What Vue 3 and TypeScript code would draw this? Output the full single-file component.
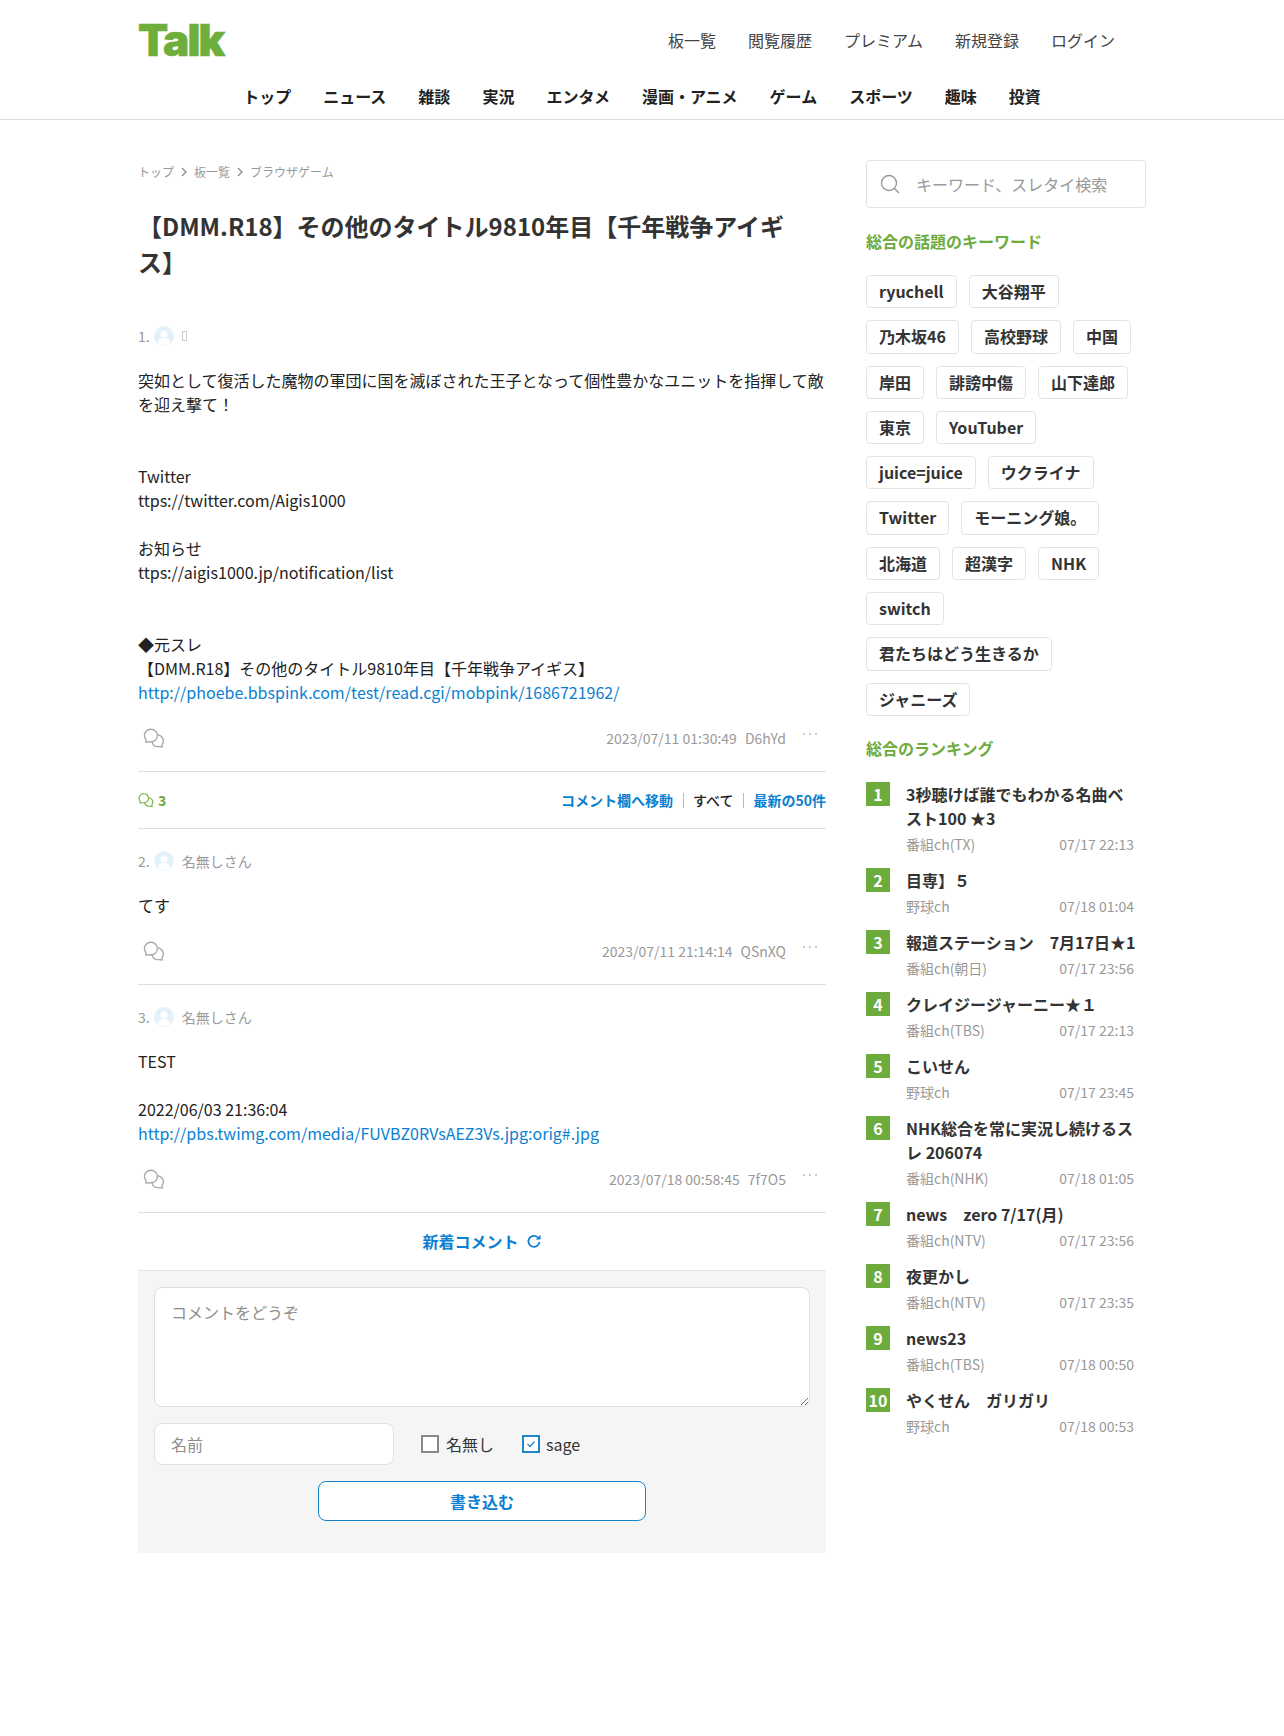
<script setup lang="ts">
interface Post {
  no: number
  name: string
  lines: { text: string; href?: boolean }[]
  date: string
  id: string
}
const topNav: string[] = ['板一覧', '閲覧履歴', 'プレミアム', '新規登録', 'ログイン']
const mainNav: string[] = ['トップ', 'ニュース', '雑談', '実況', 'エンタメ', '漫画・アニメ', 'ゲーム', 'スポーツ', '趣味', '投資']
const keywords: string[] = ['ryuchell', '大谷翔平', '乃木坂46', '高校野球', '中国', '岸田', '誹謗中傷', '山下達郎', '東京', 'YouTuber', 'juice=juice', 'ウクライナ', 'Twitter', 'モーニング娘。', '北海道', '超漢字', 'NHK', 'switch', '君たちはどう生きるか', 'ジャニーズ']
const ranking = [
  { t: '3秒聴けば誰でもわかる名曲ベスト100 ★3', b: '番組ch(TX)', d: '07/17 22:13' },
  { t: '目専】５', b: '野球ch', d: '07/18 01:04' },
  { t: '報道ステーション　7月17日★1', b: '番組ch(朝日)', d: '07/17 23:56' },
  { t: 'クレイジージャーニー★１', b: '番組ch(TBS)', d: '07/17 22:13' },
  { t: 'こいせん', b: '野球ch', d: '07/17 23:45' },
  { t: 'NHK総合を常に実況し続けるスレ 206074', b: '番組ch(NHK)', d: '07/18 01:05' },
  { t: 'news　zero 7/17(月)', b: '番組ch(NTV)', d: '07/17 23:56' },
  { t: '夜更かし', b: '番組ch(NTV)', d: '07/17 23:35' },
  { t: 'news23', b: '番組ch(TBS)', d: '07/18 00:50' },
  { t: 'やくせん　ガリガリ', b: '野球ch', d: '07/18 00:53' },
]
const first: Post = {
  no: 1,
  name: '',
  lines: [
    { text: '突如として復活した魔物の軍団に国を滅ぼされた王子となって個性豊かなユニットを指揮して敵を迎え撃て！' },
    { text: '' },
    { text: '' },
    { text: 'Twitter' },
    { text: 'ttps://twitter.com/Aigis1000' },
    { text: '' },
    { text: 'お知らせ' },
    { text: 'ttps://aigis1000.jp/notification/list' },
    { text: '' },
    { text: '' },
    { text: '◆元スレ' },
    { text: '【DMM.R18】その他のタイトル9810年目【千年戦争アイギス】' },
    { text: 'http://phoebe.bbspink.com/test/read.cgi/mobpink/1686721962/', href: true },
  ],
  date: '2023/07/11 01:30:49',
  id: 'D6hYd',
}
const replies: Post[] = [
  { no: 2, name: '名無しさん', lines: [{ text: 'てす' }], date: '2023/07/11 21:14:14', id: 'QSnXQ' },
  {
    no: 3,
    name: '名無しさん',
    lines: [
      { text: 'TEST' },
      { text: '' },
      { text: '2022/06/03 21:36:04' },
      { text: 'http://pbs.twimg.com/media/FUVBZ0RVsAEZ3Vs.jpg:orig#.jpg', href: true },
    ],
    date: '2023/07/18 00:58:45',
    id: '7f7O5',
  },
]
const posts: { post: Post; bar: boolean }[] = [
  { post: first, bar: true },
  { post: replies[0], bar: false },
  { post: replies[1], bar: false },
]
</script>

<template>
  <div class="page">
    <header class="header">
      <div class="head-top">
        <a class="logo">Talk</a>
        <nav class="top-nav">
          <a v-for="n in topNav" :key="n">{{ n }}</a>
        </nav>
      </div>
      <nav class="main-nav">
        <a v-for="n in mainNav" :key="n">{{ n }}</a>
      </nav>
    </header>

    <div class="columns">
      <main class="content">
        <div class="crumbs">
          <a>トップ</a>
          <svg class="chev" viewBox="0 0 8 10"><path d="M2 1l4 4-4 4" /></svg>
          <a>板一覧</a>
          <svg class="chev" viewBox="0 0 8 10"><path d="M2 1l4 4-4 4" /></svg>
          <a>ブラウザゲーム</a>
        </div>
        <h1 class="title">【DMM.R18】その他のタイトル9810年目【千年戦争アイギス】</h1>

        <template v-for="item in posts" :key="item.post.no">
          <article class="post">
            <div class="post-head">
              <span class="no">{{ item.post.no }}.</span>
              <svg class="avatar" viewBox="0 0 20 20">
                <circle cx="10" cy="10" r="10" fill="#e3f1fb" />
                <circle cx="10" cy="8" r="3.600" fill="#fff" />
                <path d="M4 17c.8-3.800 3-5 6-5s5.200 1.200 6 5a10 10 0 0 1-12 0z" fill="#fff" />
              </svg>
              <span v-if="item.post.name" class="name">{{ item.post.name }}</span>
              <span v-else class="tofu"></span>
            </div>
            <div class="post-body">
              <template v-for="(l, i) in item.post.lines" :key="i">
                <a v-if="l.href" class="link">{{ l.text }}</a>
                <div v-else class="line">{{ l.text }}</div>
              </template>
            </div>
            <div class="post-foot">
              <svg class="bubbles" viewBox="0 0 24 24">
                <path d="M9 2.500a6.800 6.800 0 1 1-.1 13.600c-1.800 0-3.700-.1-5.900.4.500-1.300.3-2.300-.1-3.300A6.800 6.800 0 0 1 9 2.500z" />
                <path d="M15.700 8.600a6.500 6.500 0 0 1 5.300 10.200c-.3 1-.3 1.900.2 3-1.900-.5-3.600-.5-5.200-.4a6.500 6.500 0 0 1-6.100-5.300" />
              </svg>
              <span class="meta"><span>{{ item.post.date }}</span><span>{{ item.post.id }}</span></span>
              <svg class="dots" viewBox="0 0 16 4">
                <circle cx="2" cy="2" r="1" />
                <circle cx="8" cy="2" r="1" />
                <circle cx="14" cy="2" r="1" />
              </svg>
            </div>
          </article>
          <div v-if="item.bar" class="count-bar">
            <span class="count">
              <svg class="bubbles small" viewBox="0 0 24 24">
                <path d="M9 2.500a6.800 6.800 0 1 1-.1 13.600c-1.800 0-3.700-.1-5.900.4.500-1.300.3-2.300-.1-3.300A6.800 6.800 0 0 1 9 2.500z" />
                <path d="M15.700 8.600a6.500 6.500 0 0 1 5.300 10.200c-.3 1-.3 1.900.2 3-1.900-.5-3.600-.5-5.200-.4a6.500 6.500 0 0 1-6.100-5.300" />
              </svg>
              3
            </span>
            <span class="bar-links">
              <a class="blue">コメント欄へ移動</a>
              <i></i>
              <a class="dark">すべて</a>
              <i></i>
              <a class="blue">最新の50件</a>
            </span>
          </div>
        </template>

        <div class="refresh">
          新着コメント
          <svg viewBox="0 0 16 16"><path d="M13.400 9a5.500 5.500 0 1 1-1.700-4.700" /><path class="fill" d="M14.500 1.800v4.800H9.700z" /></svg>
        </div>

        <form class="form">
          <textarea class="textarea" placeholder="コメントをどうぞ"></textarea>
          <div class="form-row">
            <input class="name-input" placeholder="名前" />
            <span class="check"><span class="box"></span>名無し</span>
            <span class="check">
              <span class="box on"><svg viewBox="0 0 18 18"><path d="M4.500 9l3.200 3.200 5.800-6.400" /></svg></span>sage
            </span>
          </div>
          <button type="button" class="submit">書き込む</button>
        </form>
      </main>

      <aside class="side">
        <div class="search">
          <svg viewBox="0 0 24 24"><circle cx="11" cy="11" r="7.500" /><path d="M16.500 16.500l4.500 4.500" /></svg>
          <span>キーワード、スレタイ検索</span>
        </div>
        <h2 class="side-title">総合の話題のキーワード</h2>
        <div class="tags">
          <a v-for="k in keywords" :key="k" class="tag">{{ k }}</a>
        </div>
        <h2 class="side-title rank-title">総合のランキング</h2>
        <ol class="rank">
          <li v-for="(r, i) in ranking" :key="i" class="rank-item">
            <span class="badge">{{ i + 1 }}</span>
            <div class="rank-main">
              <div class="rank-t">{{ r.t }}</div>
              <div class="rank-m"><span>{{ r.b }}</span><span>{{ r.d }}</span></div>
            </div>
          </li>
        </ol>
      </aside>
    </div>
  </div>
</template>

<style>
html, body { margin: 0; background: #fff; }
</style>

<style scoped>
.page {
  min-height: 1736px;
  font-family: "Noto Sans CJK JP", "Noto Sans", sans-serif;
  color: #222;
  font-size: 16px;
  line-height: 24px;
}
a { color: inherit; text-decoration: none; }
.header { height: 119px; border-bottom: 1px solid #ddd; }
.head-top {
  width: 1008px;
  margin: 0 auto;
  height: 78px;
  display: flex;
  align-items: flex-start;
  justify-content: space-between;
}
.logo {
  font-family: Inter, sans-serif;
  font-weight: 900;
  font-size: 44px;
  line-height: 44px;
  letter-spacing: -1.900px;
  -webkit-text-stroke: 0.6px #6eaf3c;
  color: #6eaf3c;
  margin-top: 18px;
}
.top-nav {
  display: flex;
  gap: 32px;
  padding: 28px 31px 0 0;
  color: #444;
}
.main-nav {
  display: flex;
  justify-content: center;
  gap: 32px;
  font-weight: 700;
  line-height: 36px;
  color: #222;
}
.columns {
  width: 1008px;
  margin: 0 auto;
  display: flex;
  justify-content: space-between;
  padding-top: 40px;
}
.content { width: 688px; }
.crumbs {
  display: flex;
  align-items: center;
  gap: 6px;
  font-size: 12px;
  line-height: 24px;
  color: #999;
}
.chev { width: 8px; height: 10px; fill: none; stroke: #888; stroke-width: 1.200; }
.title {
  margin: 24px 0 0;
  padding-right: 8px;
  font-size: 24px;
  line-height: 36px;
  font-weight: 700;
  color: #333;
}
.post { border-bottom: 1px solid #ddd; padding-top: 20px; }
.title + .post { padding-top: 44px; }
.post-head {
  display: flex;
  align-items: center;
  font-size: 14px;
  line-height: 24px;
  color: #999;
}
.avatar { width: 20px; height: 20px; margin: 0 8px 0 4px; }
.tofu {
  box-sizing: border-box;
  width: 5px;
  height: 10px;
  border: 1px solid #ccc;
}
.post-body { margin-top: 20px; }
.line { min-height: 24px; }
.link { color: #0b7fd1; display: block; }
.post-foot {
  display: flex;
  align-items: center;
  height: 34px;
  margin-top: 17px;
  padding-bottom: 16px;
  color: #999;
}
.bubbles {
  width: 22px;
  height: 22px;
  margin-left: 5px;
  fill: none;
  stroke: #aaa;
  stroke-width: 1.500;
  stroke-linejoin: round;
}
.bubbles.small { width: 16px; height: 16px; margin: 0 4px 0 0; stroke: #7ab648; stroke-width: 1.800; }
.meta { margin-left: auto; font-size: 14px; display: flex; gap: 8px; }
.dots {
  width: 16px;
  height: 4px;
  margin: 0 8px 8px 16px;
  fill: #bbb;
}
.count-bar {
  height: 57px;
  box-sizing: border-box;
  border-bottom: 1px solid #ddd;
  display: flex;
  align-items: center;
  justify-content: space-between;
  font-size: 14px;
  font-weight: 700;
}
.count { display: flex; align-items: center; color: #6cab3c; }
.bar-links { display: flex; align-items: center; gap: 9.500px; }
.bar-links i { width: 1px; height: 15px; background: #bbb; }
.blue { color: #0b7fd1; }
.dark { color: #222; font-weight: 500; }
.refresh {
  height: 56px;
  padding-bottom: 1px;
  display: flex;
  align-items: center;
  justify-content: center;
  gap: 7px;
  font-weight: 700;
  color: #0b7fd1;
}
.refresh svg { width: 16px; height: 16px; fill: none; stroke: #0b7fd1; stroke-width: 1.800; }
.refresh .fill { fill: #0b7fd1; stroke: none; }
.form {
  background: #f5f5f5;
  border-top: 1px solid #e4e4e4;
  padding: 16px 16px 32px;
  display: flex;
  flex-direction: column;
}
.textarea {
  display: block;
  box-sizing: border-box;
  width: 100%;
  height: 120px;
  border: 1px solid #ddd;
  border-radius: 8px;
  background: #fff;
  padding: 12px 16px;
  font: inherit;
  outline: none;
}
.textarea::placeholder, .name-input::placeholder { color: #8d8d8d; }
.form-row {
  display: flex;
  align-items: center;
  margin-top: 16px;
  height: 42px;
}
.name-input {
  box-sizing: border-box;
  width: 240px;
  height: 42px;
  border: 1px solid #e2e2e2;
  border-radius: 8px;
  background: #fff;
  padding: 0 16px;
  font: inherit;
  outline: none;
}
.check { display: flex; align-items: center; margin-left: 27px; color: #333; }
.check + .check { margin-left: 28px; }
.box {
  box-sizing: border-box;
  width: 18px;
  height: 18px;
  border: 2px solid #888;
  background: #fff;
  margin-right: 7px;
  display: inline-flex;
}
.box.on { border-color: #1f86cc; margin-right: 6px; }
.box svg { width: 100%; height: 100%; fill: none; stroke: #1f86cc; stroke-width: 1.600; }
.submit {
  align-self: center;
  width: 328px;
  height: 40px;
  margin-top: 16px;
  background: #fff;
  border: 1px solid #1483cc;
  border-radius: 8px;
  color: #0b7fd1;
  font: inherit;
  font-weight: 700;
}
.side { width: 280px; }
.search {
  box-sizing: border-box;
  height: 48px;
  border: 1px solid #e2e2e2;
  border-radius: 4px;
  display: flex;
  align-items: center;
  padding-left: 11px;
  color: #999;
  font-size: 16px;
}
.search svg { width: 24px; height: 24px; margin-right: 14px; fill: none; stroke: #999; stroke-width: 1.400; }
.side-title {
  margin: 21px 0 0;
  font-size: 16px;
  line-height: 24px;
  font-weight: 700;
  color: #6cab3c;
}
.tags {
  display: flex;
  flex-wrap: wrap;
  margin-top: 22px;
}
.tag {
  box-sizing: border-box;
  height: 33.300px;
  line-height: 31px;
  padding: 0 12px;
  margin: 0 12px 12px 0;
  border: 1px solid #e4e4e4;
  border-radius: 4px;
  font-weight: 700;
  color: #333;
}
.rank-title { margin-top: 8px; }
.rank { list-style: none; margin: 22px 0 0; padding: 0; }
.rank-item { display: flex; margin-bottom: 12px; }
.badge {
  flex: none;
  width: 24px;
  height: 24px;
  background: #6cab3c;
  color: #fff;
  font-weight: 700;
  text-align: center;
  line-height: 24px;
  margin-right: 16px;
}
.rank-main { flex: 1; padding-right: 8px; }
.rank-t { font-weight: 700; color: #333; }
.rank-m {
  display: flex;
  justify-content: space-between;
  font-size: 14px;
  color: #999;
  margin-top: 2px;
  padding-right: 4px;
}
</style>
